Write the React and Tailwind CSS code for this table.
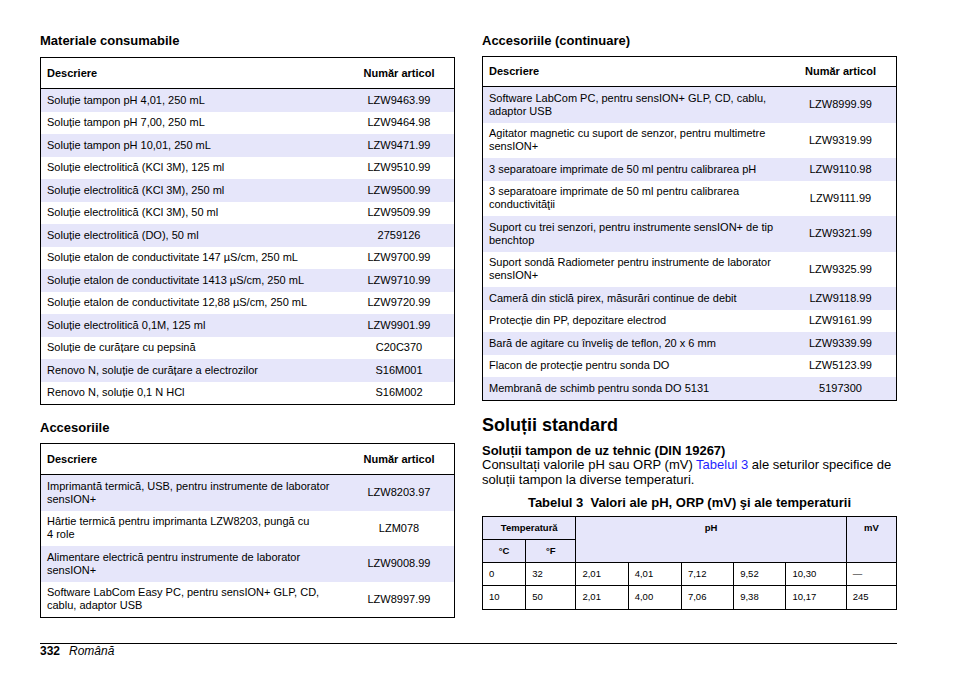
import React from "react";

const consumabile = [
  ["Soluție tampon pH 4,01, 250 mL", "LZW9463.99"],
  ["Soluție tampon pH 7,00, 250 mL", "LZW9464.98"],
  ["Soluție tampon pH 10,01, 250 mL", "LZW9471.99"],
  ["Soluție electrolitică (KCl 3M), 125 ml", "LZW9510.99"],
  ["Soluție electrolitică (KCl 3M), 250 ml", "LZW9500.99"],
  ["Soluție electrolitică (KCl 3M), 50 ml", "LZW9509.99"],
  ["Soluție electrolitică (DO), 50 ml", "2759126"],
  ["Soluție etalon de conductivitate 147 µS/cm, 250 mL", "LZW9700.99"],
  ["Soluție etalon de conductivitate 1413 µS/cm, 250 mL", "LZW9710.99"],
  ["Soluție etalon de conductivitate 12,88 µS/cm, 250 mL", "LZW9720.99"],
  ["Soluție electrolitică 0,1M, 125 ml", "LZW9901.99"],
  ["Soluție de curățare cu pepsină", "C20C370"],
  ["Renovo N, soluție de curățare a electrozilor", "S16M001"],
  ["Renovo N, soluție 0,1 N HCl", "S16M002"],
];

const accesorii = [
  [["Imprimantă termică, USB, pentru instrumente de laborator", "sensION+"], "LZW8203.97"],
  [["Hârtie termică pentru imprimanta LZW8203, pungă cu", "4 role"], "LZM078"],
  [["Alimentare electrică pentru instrumente de laborator", "sensION+"], "LZW9008.99"],
  [["Software LabCom Easy PC, pentru sensION+ GLP, CD,", "cablu, adaptor USB"], "LZW8997.99"],
];

const accesoriiCont = [
  [["Software LabCom PC, pentru sensION+ GLP, CD, cablu,", "adaptor USB"], "LZW8999.99"],
  [["Agitator magnetic cu suport de senzor, pentru multimetre", "sensION+"], "LZW9319.99"],
  [["3 separatoare imprimate de 50 ml pentru calibrarea pH"], "LZW9110.98"],
  [["3 separatoare imprimate de 50 ml pentru calibrarea", "conductivităţii"], "LZW9111.99"],
  [["Suport cu trei senzori, pentru instrumente sensION+ de tip", "benchtop"], "LZW9321.99"],
  [["Suport sondă Radiometer pentru instrumente de laborator", "sensION+"], "LZW9325.99"],
  [["Cameră din sticlă pirex, măsurări continue de debit"], "LZW9118.99"],
  [["Protecție din PP, depozitare electrod"], "LZW9161.99"],
  [["Bară de agitare cu înveliş de teflon, 20 x 6 mm"], "LZW9339.99"],
  [["Flacon de protecție pentru sonda DO"], "LZW5123.99"],
  [["Membrană de schimb pentru sonda DO 5131"], "5197300"],
];

const tempRows = [
  ["0", "32", "2,01", "4,01", "7,12", "9,52", "10,30", "—"],
  ["10", "50", "2,01", "4,00", "7,06", "9,38", "10,17", "245"],
];

const ItemTable = ({ rows, headerH, numW }) => (
  <div className="border border-black">
    <div className={`flex items-center border-b border-black text-[11px] font-bold ${headerH}`}>
      <div className="flex-1 px-[6px]">Descriere</div>
      <div className={`${numW} text-center`}>Număr articol</div>
    </div>
    {rows.map(([desc, code], index) => {
      const lines = Array.isArray(desc) ? desc : [desc];
      const tall = lines.length > 1;
      return (
        <div
          key={index}
          className={`flex items-center text-[11px] leading-[13px] ${tall ? "h-[35.5px]" : "h-[22.5px]"} ${index % 2 === 0 ? "bg-[#e6e6fa]" : "bg-white"}`}
        >
          <div className="flex-1 px-[6px]">
            {lines.map((line) => (
              <div key={line} className="whitespace-nowrap">{line}</div>
            ))}
          </div>
          <div className={`${numW} text-center`}>{code}</div>
        </div>
      );
    })}
  </div>
);

const App = () => {
  return (
    <div className="w-[954px] h-[673px] bg-white text-black font-['Liberation_Sans',Arial,sans-serif] pt-[33px]">
      <div className="flex h-[610px] pl-[40px] gap-[27px]">
        {/* left column */}
        <div className="w-[415px]">
          <h2 className="text-[13px] leading-[15px] font-bold mb-[9px]">Materiale consumabile</h2>
          <ItemTable rows={consumabile} headerH="h-[31px]" numW="w-[110px]" />

          <h2 className="text-[13px] leading-[15px] font-bold mt-[14.5px] mb-[8.5px]">Accesoriile</h2>
          <ItemTable rows={accesorii} headerH="h-[31px]" numW="w-[110px]" />
        </div>

        {/* right column */}
        <div className="w-[415px]">
          <h2 className="text-[13px] leading-[15px] font-bold mb-[8px]">Accesoriile (continuare)</h2>
          <ItemTable rows={accesoriiCont} headerH="h-[30px]" numW="w-[111px]" />

          <h1 className="text-[18px] leading-[21px] font-bold mt-[14px]">Soluții standard</h1>
          <div className="mt-[8px] text-[13px] leading-[14.5px]">
            <div className="font-bold">Soluții tampon de uz tehnic (DIN 19267)</div>
            <p>
              Consultați valorile pH sau ORP (mV) <span className="text-[#1f1fff]">Tabelul 3</span> ale seturilor specifice de soluții tampon la diverse temperaturi.
            </p>
          </div>
          <div className="mt-[8px] mb-[5px] text-center text-[13px] leading-[16px] font-bold">
            Tabelul 3&nbsp;&nbsp;Valori ale pH, ORP (mV) şi ale temperaturii
          </div>

          <table className="w-[415px] border-collapse border border-black text-[9.5px] table-fixed">
            <colgroup>
              <col className="w-[43px]" />
              <col className="w-[50px]" />
              <col className="w-[52px]" />
              <col className="w-[53px]" />
              <col className="w-[52px]" />
              <col className="w-[52px]" />
              <col className="w-[60px]" />
              <col className="w-[50px]" />
            </colgroup>
            <thead className="bg-[#e6e6fa] font-bold">
              <tr className="h-[22.5px]">
                <th colSpan={2} className="border border-black align-top pt-[5px] leading-[12px]">Temperatură</th>
                <th colSpan={5} rowSpan={2} className="border border-black align-top pt-[5px] leading-[12px]">pH</th>
                <th rowSpan={2} className="border border-black align-top pt-[5px] leading-[12px]">mV</th>
              </tr>
              <tr className="h-[23px]">
                <th className="border border-black align-top pt-[5px] leading-[12px]">°C</th>
                <th className="border border-black align-top pt-[5px] leading-[12px]">°F</th>
              </tr>
            </thead>
            <tbody>
              {tempRows.map((row, index) => (
                <tr key={index} className="h-[23.5px]">
                  {row.map((cell, i) => (
                    <td key={i} className="border border-black px-[6px] text-left align-middle">{cell}</td>
                  ))}
                </tr>
              ))}
            </tbody>
          </table>
        </div>
      </div>

      <div className="ml-[40px] w-[857px] border-t border-black flex gap-[9px] text-[12px] leading-[14px]">
        <span className="font-bold">332</span>
        <span className="italic">Română</span>
      </div>
    </div>
  );
};

export default App;
